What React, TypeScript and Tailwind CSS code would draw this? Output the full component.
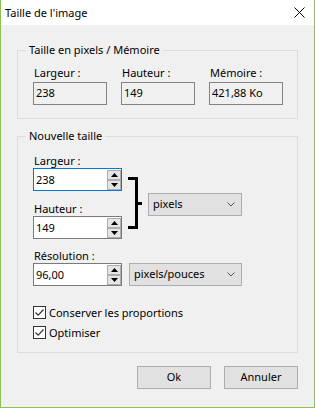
import React from 'react';

const font = { fontFamily: '"Segoe UI", "Noto Sans", sans-serif' };

const SpinButton = ({ up }: { up?: boolean }) => (
  <div className="flex h-[10px] w-[14px] items-center justify-center border border-[#adadad] bg-[#e5e5e5]">
    <svg width="7" height="4" viewBox="0 0 7 4">
      {up ? <path d="M0 4 L3.5 0 L7 4 Z" fill="#000" /> : <path d="M0 0 L3.5 4 L7 0 Z" fill="#000" />}
    </svg>
  </div>
);

const SpinField = ({ value, focused }: { value: string; focused?: boolean }) => (
  <div
    className={`flex h-[23px] w-[89px] items-center bg-white border ${
      focused ? 'border-[#0078d7]' : 'border-[#7a7a7a]'
    }`}
  >
    <span className="flex-1 pl-[2px] text-[11px] leading-[15px] text-black">{value}</span>
    <div className="flex flex-col gap-0">
      <SpinButton up />
      <SpinButton />
    </div>
  </div>
);

const ReadField = ({ label, value }: { label: string; value: string }) => (
  <div className="flex flex-col">
    <span className="text-[11px] leading-[16px] pl-[1px]">{label}</span>
    <div className="mt-[1px] flex h-[23px] w-[74px] items-center border border-[#838383] bg-[#f0f0f0] pl-[2px] text-[11px]">
      {value}
    </div>
  </div>
);

const Select = ({ value, width }: { value: string; width: string }) => (
  <div className={`flex h-[23px] ${width} items-center justify-between border border-[#adadad] bg-[#e1e1e1] pl-[4px] pr-[6px] text-[11px]`}>
    <span>{value}</span>
    <svg width="8" height="5" viewBox="0 0 8 5">
      <path d="M0.5 0.5 L4 4 L7.5 0.5" stroke="#555" strokeWidth="1" fill="none" />
    </svg>
  </div>
);

const Checkbox = ({ label }: { label: string }) => (
  <div className="flex h-[13px] items-center gap-[3px]">
    <div className="flex h-[13px] w-[13px] items-center justify-center border border-[#333] bg-white">
      <svg width="11" height="11" viewBox="0 0 11 11">
        <path d="M1.5 5.5 L4.2 8.2 L9.5 2.5" stroke="#333" strokeWidth="1.2" fill="none" />
      </svg>
    </div>
    <span className="text-[11px] leading-[15px]">{label}</span>
  </div>
);

const Button = ({ children }: { children: React.ReactNode }) => (
  <button className="flex h-[23px] w-[74px] items-center justify-center border border-[#adadad] bg-[#e1e1e1] text-[11px]">
    {children}
  </button>
);

export default function App() {
  return (
    <div
      style={font}
      className="flex h-[408px] w-[315px] flex-col border-x border-b border-[#8dc152] bg-[#f0f0f0] text-black"
    >
      {/* Title bar */}
      <div className="flex h-[25px] items-center justify-between bg-white pl-[4px] pr-[9px]">
        <span className="text-[11px] leading-[16px]">Taille de l'image</span>
        <svg width="11" height="11" viewBox="0 0 11 11">
          <path d="M0.5 0.5 L10.5 10.5 M10.5 0.5 L0.5 10.5" stroke="#000" strokeWidth="1" />
        </svg>
      </div>

      <div className="flex flex-col pl-[16px] pr-[16px]">
        {/* Taille en pixels / Mémoire */}
        <fieldset className="mt-[18px] border border-[#dcdcdc] pb-[13px]">
          <legend className="ml-[8px] px-[3px] text-[11px] leading-[14px]">Taille en pixels / Mémoire</legend>
          <div className="mt-[8px] flex gap-[14px] pl-[15px]">
            <ReadField label="Largeur :" value="238" />
            <ReadField label="Hauteur :" value="149" />
            <ReadField label="Mémoire :" value="421,88 Ko" />
          </div>
        </fieldset>

        {/* Nouvelle taille */}
        <fieldset className="mt-[10px] border border-[#dcdcdc] pb-[13px]">
          <legend className="ml-[8px] px-[3px] text-[11px] leading-[14px]">Nouvelle taille</legend>
          <div className="flex flex-col pl-[15px]">
            <div className="mt-[10px] flex items-start">
              <div className="flex w-[89px] flex-col">
                <span className="pl-[1px] text-[11px] leading-[15px]">Largeur :</span>
                <SpinField value="238" focused />
                <span className="mt-[10px] pl-[1px] text-[11px] leading-[15px]">Hauteur :</span>
                <SpinField value="149" />
              </div>
              <svg className="ml-[6px] mt-[24px]" width="14" height="52" viewBox="0 0 14 52">
                <path d="M0 1.5 H8.5 V50.5 H0 M8.5 26.5 H14" stroke="#000" strokeWidth="3" fill="none" />
              </svg>
              <div className="ml-[6px] mt-[40px]">
                <Select value="pixels" width="w-[94px]" />
              </div>
            </div>

            <span className="mt-[9px] pl-[1px] text-[11px] leading-[15px]">Résolution :</span>
            <div className="flex items-center gap-[7px]">
              <SpinField value="96,00" />
              <Select value="pixels/pouces" width="w-[113px]" />
            </div>

            <div className="mt-[20px] flex flex-col gap-[7px]">
              <Checkbox label="Conserver les proportions" />
              <Checkbox label="Optimiser" />
            </div>
          </div>
        </fieldset>

        {/* Buttons */}
        <div className="mt-[13px] flex justify-end gap-[13px]">
          <Button>Ok</Button>
          <Button>Annuler</Button>
        </div>
      </div>
    </div>
  );
}
